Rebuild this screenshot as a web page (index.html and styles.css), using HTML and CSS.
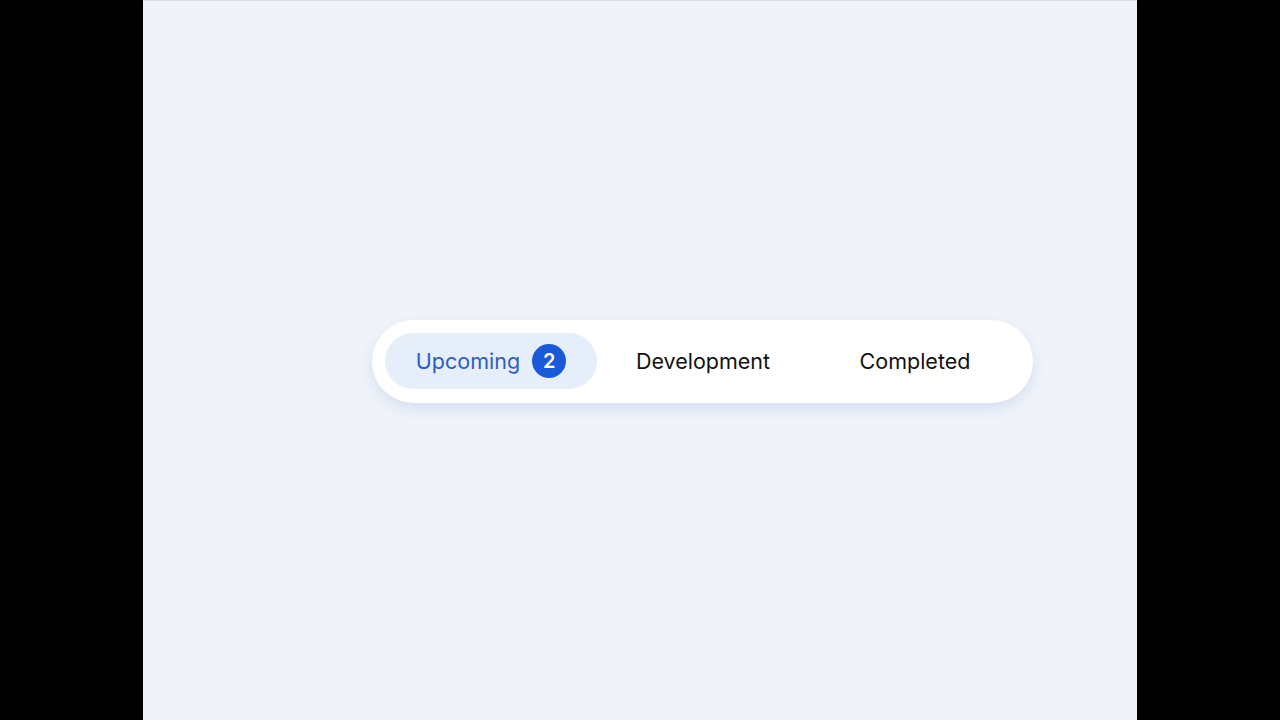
FILE: index.html
```html
<!DOCTYPE html>
<html>
<head>
<meta charset="utf-8">
<link rel="stylesheet" href="styles.css">
</head>
<body>
<main class="stage">
  <nav class="tabbar">
    <button class="tab active">Upcoming <span class="badge">2</span></button>
    <button class="tab">Development</button>
    <button class="tab">Completed</button>
  </nav>
</main>
</body>
</html>
```
FILE: styles.css
```css
html, body {
  margin: 0;
  padding: 0;
  background: #000;
  height: 100%;
}
.stage {
  width: 994px;
  height: 720px;
  margin: 0 auto;
  background: #f0f4f9;
  border-top: 1px solid #dcdfe3;
  box-sizing: border-box;
  padding-top: 319px;
  padding-left: 229px;
  font-family: Inter, "Noto Sans", sans-serif;
}
.tabbar {
  display: inline-flex;
  background: #fff;
  border-radius: 42px;
  padding: 13px 12px 14px 13px;
  box-shadow: 0 6px 14px rgba(120, 150, 220, 0.22);
}
.tab {
  width: 212px;
  height: 56px;
  border: 0;
  border-radius: 28px;
  background: transparent;
  font-family: inherit;
  font-size: 21.5px;
  color: #111;
  display: flex;
  align-items: center;
  justify-content: center;
  gap: 12px;
  padding: 0;
  cursor: pointer;
}
.tab.active {
  background: #e6eef9;
  color: #2c5dc4;
}
.badge {
  width: 34px;
  height: 34px;
  border-radius: 50%;
  background: #1a5ad9;
  color: #fff;
  font-size: 20px;
  font-weight: 600;
  display: flex;
  align-items: center;
  justify-content: center;
}
```
